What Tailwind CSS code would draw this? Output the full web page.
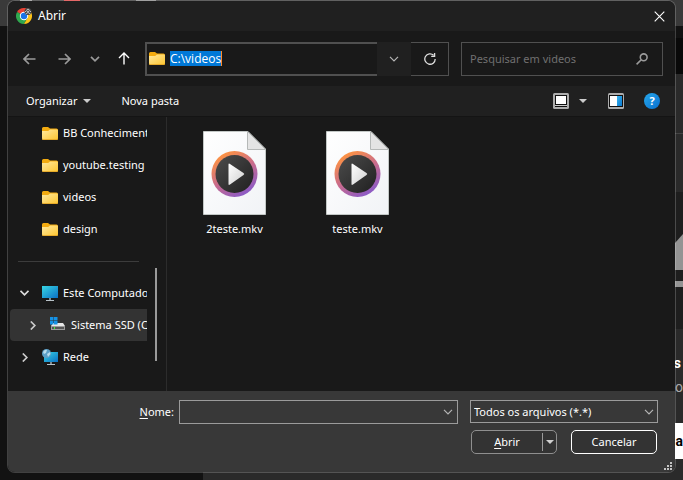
<!DOCTYPE html>
<html lang="pt-BR">
<head>
<meta charset="utf-8">
<title>Abrir</title>
<script src="https://cdn.jsdelivr.net/npm/@tailwindcss/browser@4"></script>
</head>
<body class="relative h-screen overflow-hidden bg-[#121212] font-['Noto_Sans','Open_Sans',sans-serif] text-[11px] leading-4 text-white">

<svg class="absolute size-0" aria-hidden="true">
  <defs>
    <linearGradient id="gFolder" x1="0" y1="0" x2="1" y2="1"><stop offset="0" stop-color="#ffe9a0"/><stop offset="1" stop-color="#fdc52f"/></linearGradient>
    <linearGradient id="gScreen" x1="0" y1="0" x2="1" y2="1"><stop offset="0" stop-color="#37d6e4"/><stop offset="1" stop-color="#0b6fc4"/></linearGradient>
    <linearGradient id="gRing" x1="0.2" y1="0" x2="0.8" y2="1"><stop offset="0.05" stop-color="#ff9440"/><stop offset="0.5" stop-color="#c96b8c"/><stop offset="1" stop-color="#8258cf"/></linearGradient>
    <linearGradient id="gDisc" x1="0" y1="0" x2="1" y2="1"><stop offset="0" stop-color="#4c4c4c"/><stop offset="1" stop-color="#202020"/></linearGradient>
    <linearGradient id="gPage" x1="0" y1="0" x2="1" y2="1"><stop offset="0" stop-color="#ffffff"/><stop offset="1" stop-color="#f1f3f6"/></linearGradient>
    <linearGradient id="gPlay" x1="0" y1="0" x2="1" y2="1"><stop offset="0" stop-color="#ffffff"/><stop offset="1" stop-color="#cfcfcf"/></linearGradient>
    <linearGradient id="gPane" x1="0" y1="0" x2="1" y2="1"><stop offset="0" stop-color="#35b4f0"/><stop offset="1" stop-color="#0a78d0"/></linearGradient>
    <symbol id="folder" viewBox="0 0 16 13"><path d="M0 1.500Q0 0 1.500 0H6L8 1.500H14.500Q16 1.500 16 3V7H0Z" fill="#f3ab10"/><path d="M0 4H6.200L8 2.500H15Q16 2.500 16 3.500V11.500Q16 13 14.500 13H1.500Q0 13 0 11.500Z" fill="url(#gFolder)"/><path d="M0 11.500Q0 13 1.500 13H14.500Q16 13 16 11.500Q15.500 12.200 14.500 12.200H1.500Q.5 12.200 0 11.500Z" fill="#e0a020"/></symbol>
    <symbol id="mkv" viewBox="0 0 63 84"><path d="M.5.500H45L62.500 18V83.500H.500Z" fill="url(#gPage)" stroke="#c3c8c6"/><path d="M44.500.500V18.500H62.500Z" fill="#e4e4e4" stroke="#b5b8b7"/><circle cx="31.500" cy="43" r="23" fill="url(#gRing)"/><circle cx="31.500" cy="43" r="19" fill="url(#gDisc)"/><path d="M25.500 33.500Q25.500 32 27 33L40.500 42Q42 43 40.500 44L27 53.500Q25.500 54.500 25.500 53Z" fill="url(#gPlay)"/></symbol>
    <symbol id="chev" viewBox="0 0 10 6"><path d="M1 .8L5 4.800L9 .8" fill="none" stroke="currentColor" stroke-width="1.200"/></symbol>
    <symbol id="tri" viewBox="0 0 8 4"><path d="M0 0H8L4 4Z" fill="currentColor"/></symbol>
  </defs>
</svg>

<!-- Page behind the dialog -->
<div class="flex h-full flex-col" aria-hidden="true">
  <div class="flex h-[26px] bg-[#3a3a3a] pl-5">
    <div class="h-px w-3 bg-[#999]"></div><div class="ml-8 h-0.5 w-4 bg-[#e04343]"></div>
    <div class="ml-14 h-px w-5 bg-[#8a8a8a]"></div>
  </div>
  <div class="flex grow">
    <div class="w-[203px] bg-[#121212]"></div>
    <div class="flex grow flex-col items-end bg-[#2a2a2a]">
      <div class="h-3 w-full bg-[#121212]"></div>
      <div class="h-9 w-full bg-[#090909]"></div>
      <div class="h-[60px] w-full border-b border-[#444]"></div>
      <div class="h-[58px] w-full"></div>
      <div class="flex h-[137px] w-full justify-end bg-[#1e1e1e]">
        <svg class="h-[137px] w-2" viewBox="0 0 8 137" fill="#949494"><path d="M0 51L8 42V78H0Z"/><path d="M0 89H8V95H0Z"/></svg>
      </div>
      <div class="flex grow flex-col items-end font-[Roboto,sans-serif] text-sm">
        <b class="mt-6 pr-0.5">s</b>
        <span class="mt-1 text-[#aaa]">o</span>
        <b class="mt-[26px] flex h-9 w-4 items-center justify-end bg-white text-black">a</b>
      </div>
    </div>
  </div>
</div>

<!-- File dialog -->
<main role="dialog" aria-label="Abrir" class="absolute inset-x-[7px] top-0 bottom-[7px] flex flex-col overflow-hidden rounded-lg border border-white/20 bg-[#191919] bg-clip-padding">
  <header class="flex h-[30px] shrink-0 items-center gap-1.5 bg-[#202020] pr-2.5 pl-2">
    <svg class="size-4" viewBox="0 0 16 16"><path d="M8 8L1.070 4A8 8 0 0 1 14.930 4Z" fill="#ea4335"/><path d="M8 8L1.070 4A8 8 0 0 0 8 16L11.500 10Z" fill="#2fa84f"/><path d="M8 8L14.930 4A8 8 0 0 1 8 16L11.500 10Z" fill="#fbc116"/><circle cx="8" cy="8" r="4.200" fill="#fff"/><circle cx="8" cy="8" r="3.200" fill="#1a73e8"/><circle cx="12" cy="3.500" r="3.500" fill="#444"/><circle cx="12" cy="2.500" r="1.300" fill="none" stroke="#ddd" stroke-width=".8"/><path d="M9.500 6Q12 3 14.500 6M9 3.500H10M14 3.500H15" fill="none" stroke="#ddd" stroke-width=".8"/></svg>
    <h1 class="grow text-xs">Abrir</h1>
    <button aria-label="Fechar"><svg class="size-[11px]" viewBox="0 0 11 11"><path d="M.7.7L10.300 10.300M10.300.7L.7 10.300" stroke="#fff" stroke-width="1.100"/></svg></button>
  </header>

  <nav class="flex h-[55px] shrink-0 items-center pr-3 pl-[15px]">
    <div class="flex w-[122px] shrink-0 items-center text-[#9a9a9a]">
      <button aria-label="Voltar"><svg class="h-3 w-[13px]" viewBox="0 0 13 12" fill="none" stroke="currentColor" stroke-width="1.700"><path d="M12.500 6H1.200M6 1L1 6L6 11"/></svg></button>
      <button class="ml-[22px]" aria-label="Avançar"><svg class="h-3 w-[13px]" viewBox="0 0 13 12" fill="none" stroke="currentColor" stroke-width="1.700"><path d="M.5 6H11.800M7 1L12 6L7 11"/></svg></button>
      <button class="ml-[19px]" aria-label="Locais recentes"><svg class="h-1.5 w-2.5" viewBox="0 0 10 6" fill="none" stroke="currentColor" stroke-width="1.700"><path d="M1 .8L5 4.800L9 .8"/></svg></button>
      <button class="ml-[18px] text-white" aria-label="Acima"><svg class="h-[13px] w-3" viewBox="0 0 12 13" fill="none" stroke="currentColor" stroke-width="1.400"><path d="M6 12.500V1.200M1 6L6 1L11 6"/></svg></button>
    </div>
    <div class="flex h-[34px] min-w-0 grow bg-[#191919]">
      <div class="flex min-w-0 grow items-center gap-[5px] border-2 border-r-0 border-[#505050] pl-0.5">
        <svg class="h-[13px] w-4 shrink-0"><use href="#folder"/></svg>
        <div class="relative flex min-w-0 grow items-center text-xs">
          <input id="path" aria-label="Endereço" value="C:\videos" class="w-0 grow bg-transparent text-transparent outline-none">
          <span class="absolute left-0 border-r border-[#ff8a2a] bg-[#0078d7] font-['Open_Sans',sans-serif] leading-[15px]" aria-hidden="true">C:\videos</span>
        </div>
      </div>
      <button class="flex w-[34px] items-center justify-center bg-[#202020] text-[#b5b5b5]" aria-label="Locais anteriores"><svg class="h-1.5 w-2.5"><use href="#chev"/></svg></button>
      <button class="flex w-[38px] items-center justify-center border border-l-0 border-[#505050]" aria-label="Atualizar"><svg class="size-3" viewBox="0 0 12 12" fill="none" stroke="#ddd" stroke-width="1.300"><path d="M9.600 2.300A5.200 5.200 0 1 0 11.200 6M10.600 0V3.300H7.200"/></svg></button>
    </div>
    <div class="ml-3 flex h-[34px] w-[202px] shrink-0 items-center border border-[#505050] pr-3.5 pl-2">
      <input type="search" aria-label="Pesquisar" placeholder="Pesquisar em videos" class="w-0 grow bg-transparent outline-none placeholder:text-[#707070]">
      <svg class="size-3" viewBox="0 0 12 12" fill="none" stroke="#9a9a9a" stroke-width="1.600"><circle cx="7.700" cy="4.300" r="3.400"/><path d="M5.200 6.800L.6 11.400"/></svg>
    </div>
  </nav>

  <div class="flex h-[30px] shrink-0 items-center bg-[#202020] pr-[15px] pl-[18px]">
    <button class="flex items-center gap-1.5">Organizar <svg class="h-1 w-2 text-[#ccc]"><use href="#tri"/></svg></button>
    <button class="ml-[30px]">Nova pasta</button>
    <span class="grow"></span>
    <button aria-label="Exibição"><svg class="size-4" viewBox="0 0 16 16"><rect width="16" height="16" rx="1.500" fill="#adadad"/><path d="M2 2H14V14H2Z" fill="#111"/><path d="M3 3H13V11H3Z" fill="#fff"/><path d="M2 12H14V13H2Z" fill="#ccc"/></svg></button>
    <button class="ml-2.5" aria-label="Mais opções"><svg class="h-1 w-2 text-[#ccc]"><use href="#tri"/></svg></button>
    <button class="ml-[21px]" aria-label="Painel de visualização"><svg class="size-4" viewBox="0 0 16 16"><rect width="16" height="16" rx="1.500" fill="#adadad"/><path d="M1 2H15V14H1Z" fill="#111"/><path d="M2 3H9V13H2Z" fill="#fff"/><path d="M9 3H14V13H9Z" fill="url(#gPane)"/></svg></button>
    <button class="ml-5 flex size-4 items-center justify-center rounded-full bg-linear-to-br from-[#28a8ea] to-[#0a6fd0] font-bold" aria-label="Ajuda">?</button>
  </div>

  <div class="flex min-h-0 grow border-t border-[#141414]">
    <aside class="flex w-[159px] shrink-0 border-r border-[#2c2c2c] pl-0.5">
      <ul class="w-[137px] shrink-0 overflow-hidden whitespace-nowrap">
        <li class="flex h-8 items-center gap-[5px] pl-8"><svg class="h-[13px] w-4 shrink-0"><use href="#folder"/></svg>BB Conhecimento</li>
        <li class="flex h-8 items-center gap-[5px] pl-8"><svg class="h-[13px] w-4 shrink-0"><use href="#folder"/></svg>youtube.testing</li>
        <li class="flex h-8 items-center gap-[5px] pl-8"><svg class="h-[13px] w-4 shrink-0"><use href="#folder"/></svg>videos</li>
        <li class="flex h-8 items-center gap-[5px] pl-8"><svg class="h-[13px] w-4 shrink-0"><use href="#folder"/></svg>design</li>
        <li class="mr-2 ml-2 flex h-8 items-center" role="separator"><span class="h-px grow bg-[#3c3c3c]"></span></li>
        <li class="flex h-8 items-center pl-2.5"><svg class="h-1.5 w-[9px] shrink-0" viewBox="0 0 9 6" fill="none" stroke="#ddd" stroke-width="1.700"><path d="M.5.800L4.500 4.800L8.500.8"/></svg><svg class="mr-[5px] ml-[13px] size-4 shrink-0" viewBox="0 0 16 16"><path d="M0 1H16V13H0Z" fill="url(#gScreen)"/><path d="M7 13H9V15H7Z" fill="#7f8a91"/><path d="M4 15H12V16H4Z" fill="#b8c2c9"/></svg>Este Computador</li>
        <li class="flex h-8 items-center rounded-l-sm bg-[#333] pl-5"><svg class="h-[9px] w-1.5 shrink-0" viewBox="0 0 6 9" fill="none" stroke="#ccc" stroke-width="1.700"><path d="M.8.500L4.800 4.500L.8 8.500"/></svg><svg class="mr-[5px] ml-3.5 size-4 shrink-0" viewBox="0 0 16 16"><path d="M3 6H13L15 9H1Z" fill="#e8e8e8"/><path d="M1 9H15V13H1Z" fill="#9b9b9b"/><path d="M2 10H14V12H2Z" fill="#555"/><path d="M4 10H5V12H4Z" fill="#3df03d"/><path d="M0 0H3.500V3.500H0ZM4 0H7.500V3.500H4ZM0 4H3.500V7.500H0ZM4 4H7.500V7.500H4Z" fill="#1592e6"/></svg>Sistema SSD (C:)</li>
        <li class="flex h-8 items-center pl-3"><svg class="h-[9px] w-1.5 shrink-0" viewBox="0 0 6 9" fill="none" stroke="#ccc" stroke-width="1.700"><path d="M.8.500L4.800 4.500L.8 8.500"/></svg><svg class="mr-[5px] ml-3.5 size-4 shrink-0" viewBox="0 0 16 16"><path d="M2 3H16V13H2Z" fill="url(#gScreen)"/><path d="M8 13H10V15H8Z" fill="#7f8a91"/><path d="M5 15H13V16H5Z" fill="#b8c2c9"/><circle cx="4.500" cy="4.500" r="4.500" fill="#5c9fc7"/><path d="M1 3Q3 0 5 1L4 4L2 5ZM5 5L8 3L8.500 5L6 8Z" fill="#b7dced"/></svg>Rede</li>
      </ul>
      <div class="mt-[151px] ml-2 h-[93px] w-0.5 bg-[#9a9a9a]"></div>
    </aside>
    <section class="flex grow flex-wrap items-start pt-3.5 pl-1.5" aria-label="Arquivos">
      <button class="flex w-[123px] flex-col items-center gap-1.5"><svg class="h-[84px] w-[63px]"><use href="#mkv"/></svg>2teste.mkv</button>
      <button class="flex w-[123px] flex-col items-center gap-1.5"><svg class="h-[84px] w-[63px]"><use href="#mkv"/></svg>teste.mkv</button>
    </section>
  </div>

  <form class="relative flex h-[81px] shrink-0 flex-col gap-[6px] bg-[#383838] pt-[9px] pr-[17px]" onsubmit="return false">
    <div class="flex h-6 items-start gap-3">
      <div class="flex min-w-0 grow gap-[5px]">
        <label for="name" class="w-[166px] shrink-0 text-right leading-6"><u class="underline-offset-2">N</u>ome:</label>
        <div class="flex h-6 min-w-0 grow items-center border border-[#9b9b9b] pr-1 pl-1">
          <input id="name" class="h-full w-0 grow bg-transparent outline-none">
          <svg class="h-1.5 w-2.5 text-[#b5b5b5]"><use href="#chev"/></svg>
        </div>
      </div>
      <div class="relative w-[188px] shrink-0">
        <select aria-label="Tipo de arquivo" class="h-[23px] w-full appearance-none border border-[#9b9b9b] bg-transparent pl-[3px] outline-none"><option>Todos os arquivos (*.*)</option></select>
        <svg class="pointer-events-none absolute top-[9px] right-1 h-1.5 w-2.5 text-[#b5b5b5]"><use href="#chev"/></svg>
      </div>
    </div>
    <div class="flex justify-end gap-3.5 pr-px">
      <div class="flex h-6 w-[86px] items-center rounded-[5px] border border-[#8f8f8f] bg-[#333]">
        <button class="h-full grow"><u class="underline-offset-2">A</u>brir</button>
        <button class="flex h-[18px] w-3.5 items-center justify-center border-l border-[#9b9b9b]" aria-label="Mais opções de abrir"><svg class="h-1 w-2 text-[#d0d0d0]"><use href="#tri"/></svg></button>
      </div>
      <button class="h-6 w-[86px] rounded-[5px] border border-white bg-[#333]">Cancelar</button>
    </div>
    <svg class="absolute right-[3px] bottom-0.5 size-2" viewBox="0 0 8 8" fill="#c4c4c4"><path d="M6 0H8V2H6ZM3 3H5V5H3ZM6 3H8V5H6ZM0 6H2V8H0ZM3 6H5V8H3ZM6 6H8V8H6Z"/></svg>
  </form>
</main>
</body>
</html>
